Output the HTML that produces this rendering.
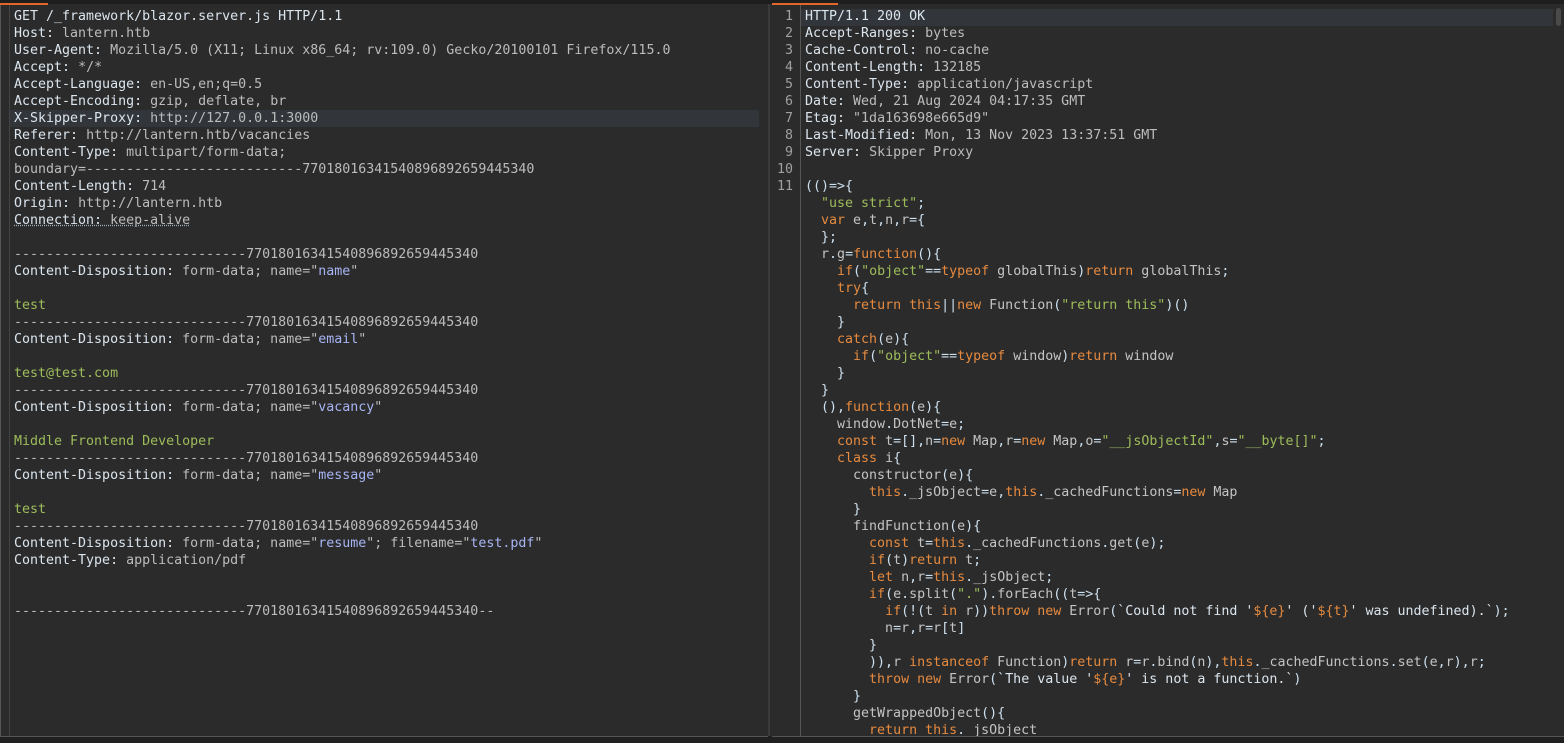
<!DOCTYPE html>
<html><head><meta charset="utf-8"><style>
html,body{margin:0;padding:0;background:#2b2b2b;width:1564px;height:743px;overflow:hidden}
body{position:relative;font-family:"DejaVu Sans Mono","Liberation Mono",monospace;font-size:13.3px;color:#c4c4c4}
.pane{position:absolute;top:4px;height:732px;background:#2b2b2b}
.l{left:0;width:768px;border-left:1px solid #555;}
.r{left:770px;width:794px;}
.top{position:absolute;top:0;left:0;width:1564px;height:4px;background:#1e1e1e}
.tab{position:absolute;top:3px;height:2px;background:#e2672b}
.code{position:absolute;left:13px;top:4px;line-height:17px;white-space:pre}
.rc{position:absolute;left:35px;top:4px;line-height:17px;white-space:pre}
.gut{position:absolute;left:0;top:4px;width:23px;text-align:right;line-height:17px;color:#a0a0a0;white-space:pre}
.hl{position:absolute;height:17px;background:#32363a}
.h{color:#dbe5ee}.v{color:#bcbcbc}.b{color:#a7b4f3}.s{color:#9dbc5a}.k{color:#e68a3f}.p{color:#cde0ee}
.u{text-decoration:underline dotted #9ab;}
.bottom{position:absolute;top:736px;left:0;width:1564px;height:7px;background:#202020}
</style></head><body>
<div class="top"></div>
<div class="pane l">
<div class="hl" style="left:8px;top:106px;width:750px"></div>
<div style="position:absolute;left:8px;top:0;width:1px;height:732px;background:#444"></div>
<div class="code"><span class="h">GET /_framework/blazor.server.js HTTP/1.1</span>
<span class="h">Host:</span> <span class="v">lantern.htb</span>
<span class="h">User-Agent:</span> <span class="v">Mozilla/5.0 (X11; Linux x86_64; rv:109.0) Gecko/20100101 Firefox/115.0</span>
<span class="h">Accept:</span> <span class="v">*/*</span>
<span class="h">Accept-Language:</span> <span class="v">en-US,en;q=0.5</span>
<span class="h">Accept-Encoding:</span> <span class="v">gzip, deflate, br</span>
<span class="h">X-Skipper-Proxy:</span> <span class="v">http://127.0.0.1:3000</span>
<span class="h">Referer:</span> <span class="v">http://lantern.htb/vacancies</span>
<span class="h">Content-Type:</span> <span class="v">multipart/form-data;</span>
<span class="v">boundary=---------------------------77018016341540896892659445340</span>
<span class="h">Content-Length:</span> <span class="v">714</span>
<span class="h">Origin:</span> <span class="v">http://lantern.htb</span>
<span class="u"><span class="h">Connection:</span> <span class="v">keep-alive</span></span>

<span class="v">-----------------------------77018016341540896892659445340</span>
<span class="h">Content-Disposition:</span> <span class="v">form-data; name="</span><span class="b">name</span><span class="v">"</span>

<span class="s">test</span>
<span class="v">-----------------------------77018016341540896892659445340</span>
<span class="h">Content-Disposition:</span> <span class="v">form-data; name="</span><span class="b">email</span><span class="v">"</span>

<span class="s">test@test.com</span>
<span class="v">-----------------------------77018016341540896892659445340</span>
<span class="h">Content-Disposition:</span> <span class="v">form-data; name="</span><span class="b">vacancy</span><span class="v">"</span>

<span class="s">Middle Frontend Developer</span>
<span class="v">-----------------------------77018016341540896892659445340</span>
<span class="h">Content-Disposition:</span> <span class="v">form-data; name="</span><span class="b">message</span><span class="v">"</span>

<span class="s">test</span>
<span class="v">-----------------------------77018016341540896892659445340</span>
<span class="h">Content-Disposition:</span> <span class="v">form-data; name="</span><span class="b">resume</span><span class="v">"; filename="</span><span class="b">test.pdf</span><span class="v">"</span>
<span class="h">Content-Type:</span> <span class="v">application/pdf</span>


<span class="v">-----------------------------77018016341540896892659445340--</span></div>
</div>
<div class="tab" style="left:0;width:48px"></div>
<div style="position:absolute;left:768px;top:4px;width:2px;height:735px;background:#3a3a3a"></div>
<div class="pane r">
<div class="hl" style="left:31px;top:5px;width:752px"></div>
<div style="position:absolute;left:30px;top:0;width:1px;height:732px;background:#555"></div>
<div style="position:absolute;left:786px;top:4px;width:5px;height:18px;border-radius:3px;background:#4a4a4a"></div>
<div class="gut">1
2
3
4
5
6
7
8
9
10
11</div>
<div class="rc"><span class="h">HTTP/1.1 200 OK</span>
<span class="h">Accept-Ranges:</span> <span class="v">bytes</span>
<span class="h">Cache-Control:</span> <span class="v">no-cache</span>
<span class="h">Content-Length:</span> <span class="v">132185</span>
<span class="h">Content-Type:</span> <span class="v">application/javascript</span>
<span class="h">Date:</span> <span class="v">Wed, 21 Aug 2024 04:17:35 GMT</span>
<span class="h">Etag:</span> <span class="v">"1da163698e665d9"</span>
<span class="h">Last-Modified:</span> <span class="v">Mon, 13 Nov 2023 13:37:51 GMT</span>
<span class="h">Server:</span> <span class="v">Skipper Proxy</span>

<span class="p">(()=&gt;{</span>
  <span class="s">"use strict"</span><span class="p">;</span>
  <span class="k">var</span> e<span class="p">,</span>t<span class="p">,</span>n<span class="p">,</span>r<span class="p">={</span>
  <span class="p">};</span>
  r<span class="p">.</span>g<span class="p">=</span><span class="k">function</span><span class="p">(){</span>
    <span class="k">if</span><span class="p">(</span><span class="s">"object"</span><span class="p">==</span><span class="k">typeof</span> globalThis<span class="p">)</span><span class="k">return</span> globalThis<span class="p">;</span>
    <span class="k">try</span><span class="p">{</span>
      <span class="k">return this</span><span class="p">||</span><span class="k">new</span> Function<span class="p">(</span><span class="s">"return this"</span><span class="p">)()</span>
    <span class="p">}</span>
    <span class="k">catch</span><span class="p">(</span>e<span class="p">){</span>
      <span class="k">if</span><span class="p">(</span><span class="s">"object"</span><span class="p">==</span><span class="k">typeof</span> window<span class="p">)</span><span class="k">return</span> window
    <span class="p">}</span>
  <span class="p">}</span>
  <span class="p">(),</span><span class="k">function</span><span class="p">(</span>e<span class="p">){</span>
    window<span class="p">.</span>DotNet<span class="p">=</span>e<span class="p">;</span>
    <span class="k">const</span> t<span class="p">=[],</span>n<span class="p">=</span><span class="k">new</span> Map<span class="p">,</span>r<span class="p">=</span><span class="k">new</span> Map<span class="p">,</span>o<span class="p">=</span><span class="s">"__jsObjectId"</span><span class="p">,</span>s<span class="p">=</span><span class="s">"__byte[]"</span><span class="p">;</span>
    <span class="k">class</span> i<span class="p">{</span>
      constructor<span class="p">(</span>e<span class="p">){</span>
        <span class="k">this</span><span class="p">.</span>_jsObject<span class="p">=</span>e<span class="p">,</span><span class="k">this</span><span class="p">.</span>_cachedFunctions<span class="p">=</span><span class="k">new</span> Map
      <span class="p">}</span>
      findFunction<span class="p">(</span>e<span class="p">){</span>
        <span class="k">const</span> t<span class="p">=</span><span class="k">this</span><span class="p">.</span>_cachedFunctions<span class="p">.</span>get<span class="p">(</span>e<span class="p">);</span>
        <span class="k">if</span><span class="p">(</span>t<span class="p">)</span><span class="k">return</span> t<span class="p">;</span>
        <span class="k">let</span> n<span class="p">,</span>r<span class="p">=</span><span class="k">this</span><span class="p">.</span>_jsObject<span class="p">;</span>
        <span class="k">if</span><span class="p">(</span>e<span class="p">.</span>split<span class="p">(</span><span class="s">"."</span><span class="p">).</span>forEach<span class="p">((</span>t<span class="p">=&gt;{</span>
          <span class="k">if</span><span class="p">(!(</span>t <span class="k">in</span> r<span class="p">))</span><span class="k">throw new</span> Error<span class="p">(</span><span class="h">`Could not find '</span><span class="k">${e}</span><span class="h">' ('</span><span class="k">${t}</span><span class="h">' was undefined).`</span><span class="p">);</span>
          n<span class="p">=</span>r<span class="p">,</span>r<span class="p">=</span>r<span class="p">[</span>t<span class="p">]</span>
        <span class="p">}</span>
        <span class="p">)),</span>r <span class="k">instanceof</span> Function<span class="p">)</span><span class="k">return</span> r<span class="p">=</span>r<span class="p">.</span>bind<span class="p">(</span>n<span class="p">),</span><span class="k">this</span><span class="p">.</span>_cachedFunctions<span class="p">.</span>set<span class="p">(</span>e<span class="p">,</span>r<span class="p">),</span>r<span class="p">;</span>
        <span class="k">throw new</span> Error<span class="p">(</span><span class="h">`The value '</span><span class="k">${e}</span><span class="h">' is not a function.`</span><span class="p">)</span>
      <span class="p">}</span>
      getWrappedObject<span class="p">(){</span>
        <span class="k">return this</span><span class="p">.</span>_jsObject</div>
</div>
<div class="tab" style="left:772px;width:66px"></div>
<div class="bottom"></div>
<div style="position:absolute;left:0;top:736px;width:768px;height:1px;background:#555"></div>
<div style="position:absolute;left:772px;top:736px;width:792px;height:1px;background:#555"></div>
</body></html>
